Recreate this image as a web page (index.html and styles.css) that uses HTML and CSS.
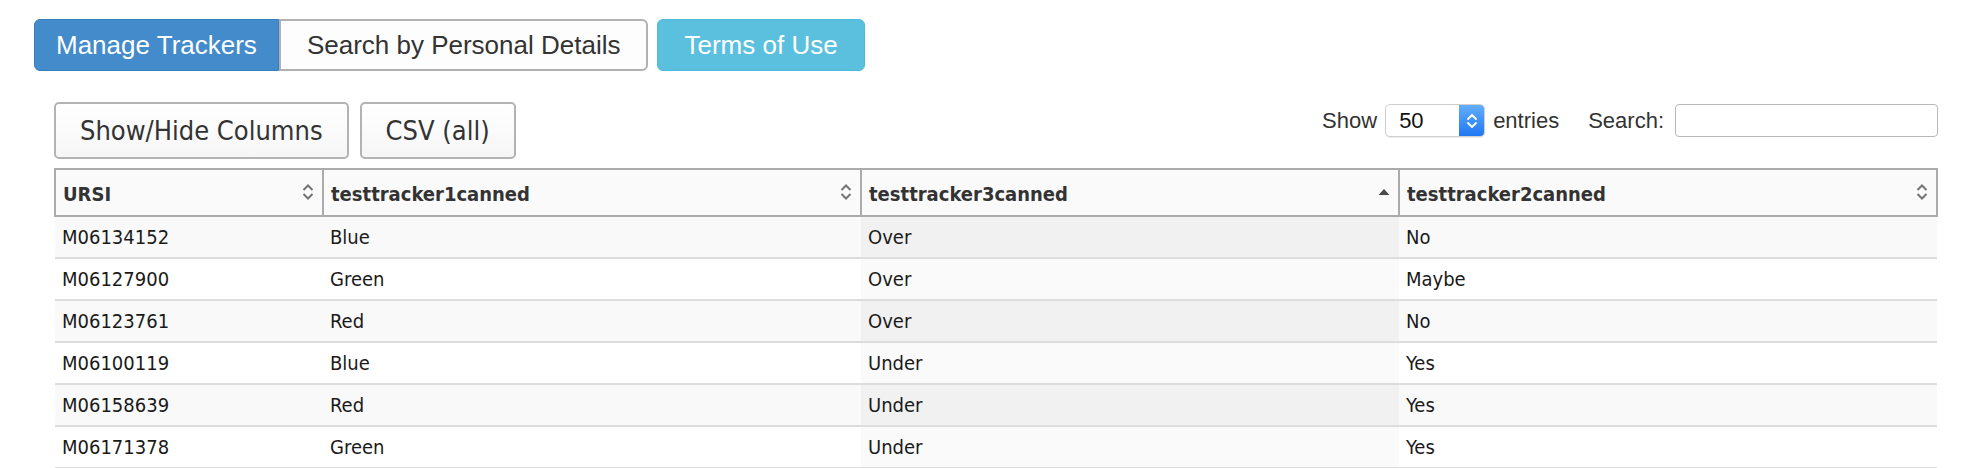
FILE: index.html
```html
<!DOCTYPE html>
<html lang="en">

<head>
    <meta charset="UTF-8" />
    <meta name="viewport" content="width=device-width, initial-scale=1.0" />
    <title>Trackers</title>

    <link rel="stylesheet" href="styles.css">
</head>

<body>
    <nav class="nav">
        <div class="btn-group">
            <a class="btn btn-primary" href="#">Manage Trackers</a>
            <a class="btn btn-default" href="#">Search by Personal Details</a>
        </div>
        <a class="btn btn-info" href="#">Terms of Use</a>
    </nav>

    <main class="tracker-table">
        <div class="toolbar">
            <div class="dt-buttons">
                <button class="dt-button" type="button">Show/Hide Columns</button>
                <button class="dt-button" type="button">CSV (all)</button>
            </div>
            <div class="dt-controls">
                <label class="dt-length">Show
                    <span class="fake-select">
                        <span class="fake-select-value">50</span>
                        <span class="fake-select-arrow">
                            <svg width="12" height="20" viewBox="0 0 12 20">
                                <path d="M2 8 L6 4 L10 8 M2 12 L6 16 L10 12" fill="none" stroke="#fff" stroke-width="1.8" stroke-linecap="round" stroke-linejoin="round" />
                            </svg>
                        </span>
                    </span>
                    entries</label>
                <label class="dt-search">Search: <input type="search" /></label>
            </div>
        </div>

        <table class="data-table">
            <colgroup>
                <col class="col-ursi" />
                <col class="col-wide" />
                <col class="col-wide" />
                <col class="col-wide" />
            </colgroup>
            <thead>
                <tr>
                    <th><span>URSI</span><svg class="sort" width="14" height="20" viewBox="0 0 14 20"><path d="M2.5 8 L7 3.5 L11.5 8 M2.5 12 L7 16.5 L11.5 12" fill="none" stroke="#747474" stroke-width="2" /></svg></th>
                    <th><span>testtracker1canned</span><svg class="sort" width="14" height="20" viewBox="0 0 14 20"><path d="M2.5 8 L7 3.5 L11.5 8 M2.5 12 L7 16.5 L11.5 12" fill="none" stroke="#747474" stroke-width="2" /></svg></th>
                    <th><span>testtracker3canned</span><svg class="sort" width="14" height="20" viewBox="0 0 14 20"><path d="M1.5 13 L7 7 L12.5 13 Z" fill="#4a4a4a" /></svg></th>
                    <th><span>testtracker2canned</span><svg class="sort" width="14" height="20" viewBox="0 0 14 20"><path d="M2.5 8 L7 3.5 L11.5 8 M2.5 12 L7 16.5 L11.5 12" fill="none" stroke="#747474" stroke-width="2" /></svg></th>
                </tr>
            </thead>
            <tbody>
                <tr class="odd"><td>M06134152</td><td>Blue</td><td class="sorting_1">Over</td><td>No</td></tr>
                <tr class="even"><td>M06127900</td><td>Green</td><td class="sorting_1">Over</td><td>Maybe</td></tr>
                <tr class="odd"><td>M06123761</td><td>Red</td><td class="sorting_1">Over</td><td>No</td></tr>
                <tr class="even"><td>M06100119</td><td>Blue</td><td class="sorting_1">Under</td><td>Yes</td></tr>
                <tr class="odd"><td>M06158639</td><td>Red</td><td class="sorting_1">Under</td><td>Yes</td></tr>
                <tr class="even"><td>M06171378</td><td>Green</td><td class="sorting_1">Under</td><td>Yes</td></tr>
            </tbody>
        </table>
    </main>
</body>

</html>
```

FILE: styles.css
```css
* {
    margin: 0;
    padding: 0;
    box-sizing: border-box;
}

body {
    background: #fff;
    color: #333;
    font-family: "Liberation Sans", Arial, sans-serif;
    padding: 19px 0 0 34px;
}

/**
* Top navigation
*/
.nav {
    display: flex;
    gap: 9px;
}

.btn-group {
    display: flex;
}

.btn {
    display: inline-block;
    font-size: 26px;
    line-height: 30px;
    padding: 10px 21px;
    border: 1px solid transparent;
    border-radius: 6px;
    text-decoration: none;
}

.btn-group .btn:first-child {
    border-top-right-radius: 0;
    border-bottom-right-radius: 0;
}

.btn-group .btn:last-child {
    border-top-left-radius: 0;
    border-bottom-left-radius: 0;
}

.btn-primary {
    background-color: #438bca;
    border-color: #3a7fbd;
    color: #fff;
}

.btn-default {
    background-color: #fdfdfd;
    border: 2px solid #b1b1b1;
    padding: 9px 26px;
    color: #333;
}

.btn-info {
    background-color: #5bc0de;
    border-color: #4fb9d9;
    color: #fff;
    padding: 10px 26px;
}

/**
* Table area
*/
.tracker-table {
    margin: 31px 0 0 20px;
    width: 1884px;
}

.toolbar {
    display: flex;
    justify-content: space-between;
    align-items: flex-start;
}

.dt-buttons {
    display: flex;
    gap: 11px;
}

.dt-button {
    font-family: "DejaVu Sans Condensed", "DejaVu Sans", sans-serif;
    font-stretch: condensed;
    font-size: 27px;
    color: #333;
    height: 57px;
    padding: 0 24px;
    border: 2px solid #b3b3b3;
    border-radius: 5px;
    background: linear-gradient(#fff, #f6f6f6);
}

.dt-controls {
    display: flex;
    align-items: center;
    gap: 29px;
    margin-top: 2px;
    font-size: 22px;
    color: #333;
}

.dt-length,
.dt-search {
    display: flex;
    align-items: center;
}

.fake-select {
    display: flex;
    width: 100px;
    height: 33px;
    margin: 0 8px;
    border: 1px solid #cfcfcf;
    border-radius: 5px;
    background: #fff;
    box-shadow: 0 1px 1px rgba(0, 0, 0, 0.08);
    overflow: hidden;
}

.fake-select-value {
    flex: 1;
    padding-left: 13px;
    line-height: 31px;
    color: #111;
}

.fake-select-arrow {
    width: 25px;
    display: flex;
    align-items: center;
    justify-content: center;
    background: linear-gradient(#64aefc, #1f78f3);
}

.dt-search input {
    margin-left: 11px;
    width: 263px;
    height: 33px;
    border: 1px solid #b8b8b8;
    border-radius: 4px;
    background: #fff;
}

.data-table {
    margin-top: 9px;
    width: 100%;
    table-layout: fixed;
    border-collapse: collapse;
    font-family: "DejaVu Sans Condensed", "DejaVu Sans", sans-serif;
    font-stretch: condensed;
    font-size: 20px;
    color: #1a1a1a;
}

.col-ursi {
    width: 268px;
}

.data-table th {
    height: 47px;
    background: #fafafa;
    border: 2px solid #ababab;
    padding: 0 7px;
    text-align: left;
    font-size: 20px;
    color: #333;
}

.data-table th span {
    vertical-align: middle;
}

.data-table th .sort {
    float: right;
    margin-top: 2px;
}

.data-table td {
    height: 42px;
    padding: 0 7px;
    border-bottom: 2px solid #dddddd;
    white-space: nowrap;
}

.odd td {
    background: #f9f9f9;
}

.odd td.sorting_1 {
    background: #f1f1f1;
}

.even td.sorting_1 {
    background: #fafafa;
}
```
